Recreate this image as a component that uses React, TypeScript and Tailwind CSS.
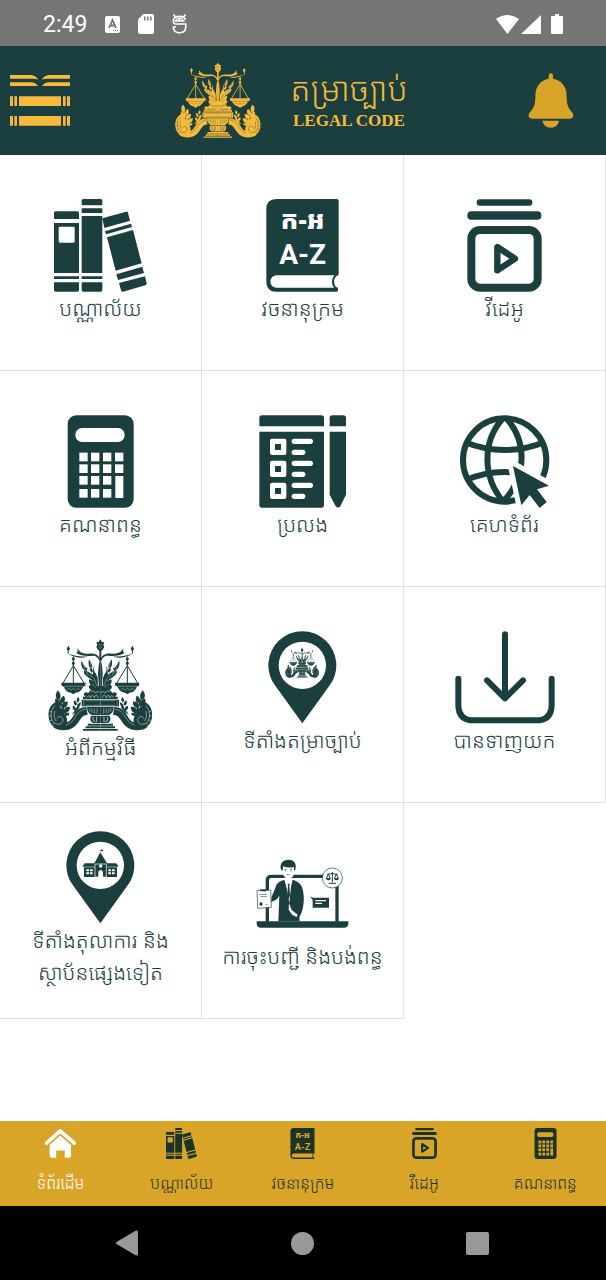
import React from 'react';

interface IconProps {
  className?: string;
  cut?: string;
}

interface MenuItem {
  label: string;
  icon: React.ReactNode;
}

// one half of the emblem, the other half is mirrored
const EmblemHalf = ({ cut }: { cut: string }) => (
  <g>
    {/* beam */}
    <path d="M302 118 C296 102 284 99 268 100 C254 101 246 99 239 92 L233 84 L234 95 L229 97 C240 106 262 108 278 106 C290 106 296 112 299 122Z" />
    <path d="M202 97 C216 106 240 109 264 108 L250 112 C232 112 212 107 202 97Z" />
    <path d="M206 76 L211 85 L207 92 L207 99 L204 99 L204 92 L201 85Z" />
    {/* hanging pan */}
    <path d="M221 108 l5 8 l-4 6 l4 7 l-5 9 l-5 -9 l4 -7 l-4 -6Z" />
    <path d="M221 136 L189 190 M221 136 L254 190 M221 136 V190" fill="none" stroke="currentColor" strokeWidth="3" />
    <path d="M185 187 H258 L257 196 L250 199 C246 211 236 216 228 217 L221 222 L214 217 C205 216 196 211 193 199 L186 196Z" />
    <path d="M193 198 H249 M201 208 l6 -4 l7 5 l7 -5 l7 5 l7 -5 l6 4" fill="none" stroke={cut} strokeWidth="1" />
    {/* flames */}
    <path d="M302 112 L297 136 L295 160 L298 206 H302Z" />
    <path d="M286 132 C281 146 283 153 288 159 L294 172 L295 206 L282 182 C270 176 265 166 264 152 C269 158 275 158 278 163 C282 158 279 150 281 143Z" />
    <path d="M268 117 C265 130 267 139 273 145 L269 147 L276 158 L280 153 L276 143 C281 138 275 128 268 117Z" />
    <path d="M245 121 C243 134 247 145 255 149 C251 153 252 160 258 165 L272 177 L266 160 L261 150 L264 144 C256 142 252 132 245 121Z" />
    <path d="M270 177 C266 182 268 189 273 193 L268 196 C266 203 271 208 276 208 H302 V198 L292 196 C287 186 280 180 270 177Z" />
    <path d="M250 130 L256 148 L266 166 M272 126 L275 144 M270 163 L284 176 L292 198 M277 190 L288 202" fill="none" stroke={cut} strokeWidth="1" />
    {/* lotus rim */}
    <path d="M302 206 H276 L266 218 C259 213 251 217 253 224 L258 229 H250 V236 H302Z" />
    <path d="M262 232 q6 -12 11 0 q5 -14 11 0 q6 -16 12 0 M274 214 q7 -6 13 3 q6 -7 13 0" fill="none" stroke={cut} strokeWidth="1.5" />
    {/* box and urn */}
    <path d="M246 238 H302 V258 H246Z" />
    <path d="M252 238 V257 M258 255 H302 M258 241 H302" fill="none" stroke={cut} strokeWidth="1" />
    <path d="M262 260 H302 V284 H277 C268 281 262 273 262 260Z" />
    <path d="M269 264 l3 10 M276 264 l2 14 M284 264 l1 16 M292 264 v17" fill="none" stroke={cut} strokeWidth="1.2" />
    <path d="M275 286 H302 V308 H283 C270 306 270 292 275 286Z" />
    <path d="M281 290 C278 296 280 303 287 304 M291 289 V305" fill="none" stroke={cut} strokeWidth="2" />
    <path d="M264 310 H302 V316 H264Z M258 318 H302 V324 H258Z M250 326 H302 V331 H250Z" />
    {/* arm */}
    <path d="M260 260 C240 261 230 270 221 286 C213 300 207 307 190 307 L160 320 C177 333 207 333 224 319 C241 305 242 284 264 283Z" />
    <path d="M258 267 C242 268 233 279 226 292 C217 306 207 315 186 315" fill="none" stroke={cut} strokeWidth="1.2" />
    {/* scroll */}
    <path d="M170 244 C150 252 145 273 147 291 C149 312 166 328 185 325 C201 320 206 301 200 290 C194 276 180 265 170 244Z" />
    <path d="M166 256 C153 268 152 289 158 301 C166 316 188 315 190 300 C191 288 174 285 172 295 M166 272 C161 285 165 297 170 302 M150 272 l6 3 M148 286 l7 1 M151 302 l6 -3 M160 314 l4 -5" fill="none" stroke={cut} strokeWidth="1.4" />
    {/* leaf column */}
    <path d="M175 210 C167 219 166 229 172 236 L179 238 C186 229 182 219 175 210Z" />
    <path d="M169 234 C164 240 166 250 174 255 L183 262 L184 250 C181 241 176 237 169 234Z" />
    <path d="M193 226 C184 229 181 236 184 245 L189 249 C197 243 198 235 193 226Z" />
    <path d="M204 244 C193 243 187 248 187 256 L191 263 C200 262 205 254 204 244Z" />
    <path d="M211 260 C201 258 194 263 192 271 L197 278 C206 277 211 270 211 260Z" />
    <path d="M178 236 L186 262 L198 288 L208 284 L209 277 L200 279 L190 258 L182 236Z M172 256 L180 272 L194 286 L192 272 L184 262Z" />
    {/* small leaf by the arm */}
    <path d="M236 230 C229 236 230 242 234 247 C240 242 241 236 236 230Z M225 240 C220 246 222 252 228 256 L232 252 C231 246 229 243 225 240Z M243 246 C235 248 232 254 234 261 C241 259 244 253 243 246Z M220 256 C217 263 220 268 226 270 L229 265 C228 260 225 257 220 256Z M234 250 L231 262 L216 283 L228 276 L240 262Z" />
  </g>
);

const EmblemShape = ({ cut = '#ffffff' }: { cut?: string }) => (
  <g fill="currentColor">
    <EmblemHalf cut={cut} />
    <g transform="translate(604 0) scale(-1 1)">
      <EmblemHalf cut={cut} />
    </g>
    <path d="M302 57 L307 65 L314 66 L311 74 L314 80 L309 88 L305 92 V120 H299 V92 L295 88 L290 80 L293 74 L290 66 L297 65Z" />
    <path d="M297 71 l5 4 l5 -4 M297 80 l5 4 l5 -4" fill="none" stroke={cut} strokeWidth="1.2" />
  </g>
);

const EmblemIcon = ({ className }: IconProps) => (
  <svg viewBox="142 11 321 321" className={className} aria-hidden="true">
    <EmblemShape />
  </svg>
);

const LibraryIcon = ({ className, cut = '#ffffff' }: IconProps) => (
  <svg viewBox="163 57 279 279" className={className} fill="currentColor" aria-hidden="true">
    <path d="M168 94 H233 Q238 94 238 99 V117 H163 V99 Q163 94 168 94Z M163 129 H238 V279 H163Z M163 289 H238 V297 H163Z M163 307 H238 V330 Q238 335 233 335 H168 Q163 335 163 330Z" />
    <rect x="177" y="140" width="48" height="48" rx="4" fill={cut} />
    <path d="M251 57 H303 Q308 57 308 62 V76 H246 V62 Q246 57 251 57Z M246 85 H308 V99 H246Z M246 108 H308 V279 H246Z M246 289 H308 V297 H246Z M246 307 H308 V330 Q308 335 303 335 H251 Q246 335 246 330Z" />
    <path d="M308 115 L379 95 Q384 93 385 98 L391 122 L314 144Z M316 154 L394 131 L397 141 L319 163Z M322 172 L400 150 L426 250 L348 272Z M350 283 L428 260 L433 279 L355 300Z M358 309 L436 289 L441 309 Q442 314 437 316 L370 335 Q365 336 364 331Z" />
  </svg>
);

const DictionaryIcon = ({ className, cut = '#ffffff' }: IconProps) => (
  <svg viewBox="770 57 279 279" className={className} fill="currentColor" aria-hidden="true">
    <path d="M831 57 H1012 Q1018 57 1018 63 V282 Q1018 286 1012 288 C1002 296 1002 312 1010 321 Q1016 322 1016 326 V331 Q1016 335 1011 335 H831 Q801 335 801 305 V87 Q801 57 831 57Z" />
    <path d="M832 286 H1006 C996 296 996 313 1004 323 H832 C807 322 807 288 832 286Z" fill={cut} />
    <text x="910" y="146" textAnchor="middle" fontSize="76" fontWeight="900" fill={cut} className="font-['Noto_Sans_Khmer','Noto_Sans',sans-serif]">ក-អ</text>
    <text x="910" y="252" textAnchor="middle" fontSize="84" fontWeight="700" fill={cut} className="font-[Roboto,sans-serif]">A-Z</text>
  </svg>
);

const VideoIcon = ({ className }: IconProps) => (
  <svg viewBox="467 57 279 279" className={className} fill="currentColor" aria-hidden="true">
    <rect x="523" y="58" width="167" height="19" rx="9" />
    <rect x="495" y="94" width="222" height="25" rx="12" />
    <rect x="507" y="150" width="199" height="173" rx="26" fill="none" stroke="currentColor" strokeWidth="24" />
    <path d="M585 201 V271 L638 236Z" fill="none" stroke="currentColor" strokeWidth="19" strokeLinejoin="round" />
  </svg>
);

const keyRows = [158, 193, 228, 267];
const keyCols = [240, 275, 311, 347];

const CalculatorIcon = ({ className, cut = '#ffffff' }: IconProps) => (
  <svg viewBox="164 45 279 279" className={className} fill="currentColor" aria-hidden="true">
    <rect x="205" y="46" width="198" height="277" rx="26" />
    <g fill={cut}>
      <rect x="228" y="84" width="148" height="42" rx="20" />
      {keyRows.map((y, row) =>
        keyCols.map((x, col) =>
          row > 1 && col === 3 ? null : <rect key={`${x}-${y}`} x={x} y={y} width="25" height="26" />
        )
      )}
      <rect x="348" y="228" width="24" height="66" />
    </g>
  </svg>
);

const ExamIcon = ({ className }: IconProps) => (
  <svg viewBox="769 46 279 279" className={className} fill="currentColor" aria-hidden="true">
    <path d="M787 47 H965 Q973 47 973 55 V80 H779 V55 Q779 47 787 47Z M779 96 H973 V316 Q973 324 965 324 H787 Q779 324 779 316Z" />
    <path d="M998 47 H1031 Q1039 47 1039 55 V80 H990 V55 Q990 47 998 47Z M990 96 H1039 V285 L1022 320 Q1015 327 1008 320 L990 285Z" />
    {[117, 183, 249].map((y) => (
      <g key={y}>
        <rect x="811" y={y} width="49" height="49" rx="6" fill="#ffffff" />
        <rect x="826" y={y + 16} width="18" height="18" />
        <rect x="876" y={y} width="64" height="16" rx="8" fill="#ffffff" />
        <rect x="876" y={y + 33} width="41" height="16" rx="8" fill="#ffffff" />
      </g>
    ))}
  </svg>
);

const WebsiteIcon = ({ className }: IconProps) => (
  <svg viewBox="467 45 279 279" className={className} aria-hidden="true">
    <g fill="none" stroke="currentColor" strokeWidth="18">
      <circle cx="607" cy="180" r="125" />
      <path d="M600 57 C540 125 540 230 602 304" />
      <path d="M614 57 C674 125 674 230 603 304" />
      <path d="M486 126 Q607 174 728 126" />
      <path d="M490 241 Q545 216 607 216 Q670 216 724 241" />
    </g>
    <path d="M632 198 L740 257 L704 268 L733 306 L712 324 L682 285 L657 316Z" fill="#ffffff" stroke="#ffffff" strokeWidth="30" />
    <path d="M632 198 L740 257 L704 268 L733 306 L712 324 L682 285 L657 316Z" fill="currentColor" />
  </svg>
);

const DownloadIcon = ({ className }: IconProps) => (
  <svg viewBox="758 35 300 279" className={className} fill="none" stroke="currentColor" strokeWidth="18" strokeLinecap="round" strokeLinejoin="round" aria-hidden="true">
    <path d="M908 45 V235 M854 183 L908 237 L962 183" />
    <path d="M768 178 V256 Q768 303 815 303 H1001 Q1048 303 1048 256 V178" />
  </svg>
);

const PinShape = () => (
  <>
    <path d="M302 311 L222 200 A102 102 0 1 1 382 200Z" fill="currentColor" />
    <circle cx="302" cy="137" r="71" fill="#ffffff" />
  </>
);

const BookPinIcon = ({ className }: IconProps) => (
  <svg viewBox="163 34 279 279" className={className} aria-hidden="true">
    <PinShape />
    <svg x="249" y="84" width="105" height="92" viewBox="142 55 321 280">
      <EmblemShape />
    </svg>
  </svg>
);

const CourtPinIcon = ({ className }: IconProps) => (
  <svg viewBox="163 34 279 279" className={className} fill="currentColor" aria-hidden="true">
    <PinShape />
    <path d="M302 90 H310 V95 H302Z M302 98 L322 131 H350 L357 141 H248 L255 131 H284Z" />
    <path d="M253 143 H352 V172 H253Z" />
    <path d="M286 133 H320 V172 H286Z" stroke="#ffffff" strokeWidth="2" />
    <g fill="#ffffff">
      <circle cx="303" cy="139" r="5" />
      <path d="M296 172 V156 Q303 146 310 156 V172Z" />
      <path d="M260 149 h8 v6 h-8z M271 149 h8 v6 h-8z M260 158 h8 v6 h-8z M271 158 h8 v6 h-8z M326 149 h8 v6 h-8z M337 149 h8 v6 h-8z M326 158 h8 v6 h-8z M337 158 h8 v6 h-8z" />
    </g>
  </svg>
);

const RegistrationIcon = ({ className }: IconProps) => (
  <svg viewBox="163 22 279 279" className={className} fill="currentColor" aria-hidden="true">
    {/* laptop */}
    <path d="M197 246 V122 Q197 110 209 110 H396 Q406 110 406 120 V246" fill="none" stroke="currentColor" strokeWidth="10" />
    <path d="M165 245 H440 V252 Q439 264 427 264 H178 Q166 264 165 252Z" />
    {/* lawyer */}
    <path d="M243 74 H278 V96 Q276 112 268 114 V124 L261 134 L252 124 V114 Q243 108 243 96Z" fill="#ffffff" />
    <path d="M238 90 C233 71 244 60 260 60 C277 59 286 72 281 90 L277 94 V82 C267 85 252 84 245 79 L242 94Z" />
    <path d="M248 89 h7 M264 89 h7 M250 94 h4 M265 94 h4 M256 104 q4 3 8 0" fill="none" stroke="currentColor" strokeWidth="2" />
    <path d="M248 120 C230 126 224 131 221 145 L210 171 L208 186 C220 184 228 178 233 168 L230 245 H294 L293 232 C303 218 308 188 306 168 C304 138 296 128 273 120 L261 165Z" />
    <path d="M251 121 L261 129 L270 121 L263 190Z" fill="#ffffff" />
    <path d="M258 132 h6 l-1 7 l2 28 l-4 12 l-4 -12 l2 -28Z" />
    <path d="M262 190 L270 211 L288 225 L285 232 L272 226 L261 210Z" fill="#ffffff" />
    {/* document */}
    <path d="M166 153 L207 151 L209 203 L168 206Z" fill="#ffffff" stroke="currentColor" strokeWidth="2" />
    <path d="M176 149 h18 v6 h-18z M172 164 h24 v1 h-24z M176 170 h20 v1 h-20z" />
    <circle cx="178" cy="193" r="5" />
    <path d="M190 195 h11" stroke="currentColor" />
    {/* chat */}
    <path d="M325 170 L334 174 H382 V204 H333 V181Z" />
    <path d="M341 183 H373 M341 191 H361" stroke="#ffffff" strokeWidth="4" />
    {/* scales badge */}
    <circle cx="392" cy="115" r="30" fill="#ffffff" stroke="currentColor" strokeWidth="2" />
    <path d="M392 97 V128 M377 103 Q385 105 392 101 Q399 105 408 103 M381 131 H403 M380 103 L374 117 H386 L380 103 M404 103 L398 117 H410 L404 103" fill="none" stroke="currentColor" strokeWidth="3" />
    <path d="M373 117 H388 Q380 127 373 117Z M397 117 H412 Q404 127 397 117Z" />
  </svg>
);

const HomeIcon = ({ className }: IconProps) => (
  <svg viewBox="135 54 94 93" className={className} fill="currentColor" aria-hidden="true">
    <path d="M140 99 L181 62 L224 99" fill="none" stroke="currentColor" strokeWidth="11" strokeLinecap="round" strokeLinejoin="round" />
    <path d="M181 76 L214 105 V137 Q214 144 207 144 H195 V122 H169 V144 H156 Q149 144 149 137 V105Z" />
  </svg>
);

const menuItems: MenuItem[] = [
  { label: 'បណ្ណាល័យ', icon: <LibraryIcon className="size-[93px]" /> },
  { label: 'វចនានុក្រម', icon: <DictionaryIcon className="size-[93px]" /> },
  { label: 'វីដេអូ', icon: <VideoIcon className="size-[93px]" /> },
  { label: 'គណនាពន្ធ', icon: <CalculatorIcon className="size-[93px]" /> },
  { label: 'ប្រលង', icon: <ExamIcon className="size-[93px]" /> },
  { label: 'គេហទំព័រ', icon: <WebsiteIcon className="size-[93px]" /> },
  { label: 'អំពីកម្មវិធី', icon: <EmblemIcon className="size-[107px]" /> },
  { label: 'ទីតាំងតម្រាច្បាប់', icon: <BookPinIcon className="size-[93px]" /> },
  { label: 'បានទាញយក', icon: <DownloadIcon className="h-[93px] w-[100px]" /> },
  { label: 'ទីតាំងតុលាការ និងស្ថាប័នផ្សេងទៀត', icon: <CourtPinIcon className="size-[93px]" /> },
  { label: 'ការចុះបញ្ជី និងបង់ពន្ធ', icon: <RegistrationIcon className="size-[93px]" /> }
];

const tabs: MenuItem[] = [
  { label: 'ទំព័រដើម', icon: <HomeIcon className="size-[31px]" /> },
  { label: 'បណ្ណាល័យ', icon: <LibraryIcon className="size-[31px]" cut="#d9a528" /> },
  { label: 'វចនានុក្រម', icon: <DictionaryIcon className="size-[31px]" cut="#d9a528" /> },
  { label: 'វីដេអូ', icon: <VideoIcon className="size-[31px]" /> },
  { label: 'គណនាពន្ធ', icon: <CalculatorIcon className="size-[31px]" cut="#d9a528" /> }
];

const StatusBar = () => (
  <div className="flex h-[46px] items-center justify-between bg-[#757575] px-[43px] pt-0.5 text-white">
    <div className="flex items-center gap-[18px]">
      <span className="font-[Roboto,sans-serif] text-[23px] leading-none">2:49</span>
      <svg viewBox="0 0 15 17" className="h-[17px] w-[15px]" aria-hidden="true">
        <rect width="15" height="17" rx="2" fill="currentColor" />
        <path d="M4 12 L7.500 4 L11 12 M5.500 9.500 H9.500" fill="none" stroke="#757575" strokeWidth="1.800" />
        <path d="M8 14 h1 v1 h-1z M10 14 h1 v1 h-1z M12 14 h1 v1 h-1z" fill="#757575" />
      </svg>
      <svg viewBox="0 0 16 20" className="h-5 w-4" aria-hidden="true">
        <path d="M5.500 0 H14 Q16 0 16 2 V18 Q16 20 14 20 H2 Q0 20 0 18 V5.500Z" fill="currentColor" />
        <path d="M6 2.500 h1.500 v4 h-1.500z M9 2.500 h1.500 v4 h-1.500z M12 2.500 h1.500 v4 h-1.500z" fill="#757575" />
      </svg>
      <svg viewBox="0 0 15 20" className="h-5 w-[15px]" fill="none" stroke="currentColor" strokeWidth="1.600" aria-hidden="true">
        <path d="M1.500 0.500 L3.500 3 M13.500 0.500 L11.500 3" />
        <path d="M13.500 6 C12.500 1.200 2.500 1.200 1.500 6 C1 9 2 10 4 10 H13.800 V13 C13.500 20.500 2.500 20.500 1.500 14.500 V13 H4" />
        <path d="M3.500 7 Q7.500 1 11.500 7Z" fill="currentColor" />
        <path d="M5.500 5.500 h1 M8.500 5.500 h1" stroke="#757575" />
      </svg>
    </div>
    <div className="flex items-center">
      <svg viewBox="0 0 23 19" className="h-[19px] w-[23px]" fill="currentColor" aria-hidden="true">
        <path d="M0 4 Q11.500 -4 23 4 L11.500 19Z" />
      </svg>
      <svg viewBox="0 0 20 19" className="ml-0.5 h-[19px] w-5" fill="currentColor" aria-hidden="true">
        <path d="M20 0 V19 H0Z" />
      </svg>
      <svg viewBox="0 0 12 20" className="ml-2.5 h-5 w-3" fill="currentColor" aria-hidden="true">
        <path d="M4 0 H8 V2 H11 Q12 2 12 3 V19 Q12 20 11 20 H1 Q0 20 0 19 V3 Q0 2 1 2 H4Z" />
      </svg>
    </div>
  </div>
);

const Header = () => (
  <header className="flex h-[109px] items-center justify-between bg-[#1b3f3f] pr-8 pl-[10px] text-[#f6bb3b]">
    <button type="button" aria-label="Menu">
      <svg viewBox="0 0 180 153" className="h-[51px] w-[60px]" fill="currentColor" aria-hidden="true">
        <path d="M0 0 H62 Q78 1 84 14 Q78 11 68 11 H0Z M180 0 H118 Q102 1 96 14 Q102 11 112 11 H180Z" />
        <path d="M0 22 H62 Q78 23 84 33 H0Z M180 22 H118 Q102 23 96 33 H180Z" />
        <path d="M0 64 h9 v29 h-9z M13 64 h8 v29 h-8z M27 64 h126 v29 h-126z M159 64 h8 v29 h-8z M171 64 h9 v29 h-9z" />
        <path d="M0 123 h9 v29 h-9z M13 123 h8 v29 h-8z M27 123 h126 v29 h-126z M159 123 h8 v29 h-8z M171 123 h9 v29 h-9z" />
      </svg>
    </button>
    <div className="flex items-center gap-7 pr-4">
      <svg viewBox="142 55 321 280" className="h-[77px] w-[88px]" aria-hidden="true">
        <EmblemShape cut="#1b3f3f" />
      </svg>
      <h1 className="flex flex-col items-center">
        <span className="font-['Noto_Sans_Khmer','Noto_Sans',sans-serif] text-[33px] leading-10 font-light">តម្រាច្បាប់</span>
        <span className="font-['Liberation_Serif',serif] text-[17px] leading-6 font-bold">LEGAL CODE</span>
      </h1>
    </div>
    <button type="button" aria-label="Notifications" className="text-[#d9a528]">
      <svg viewBox="676 218 138 166" className="h-[55px] w-[46px]" fill="currentColor" aria-hidden="true">
        <path d="M745 219 Q751 219 751 226 V235 C777 239 792 260 792 284 C792 312 796 324 809 337 C816 345 812 356 800 356 H690 C677 356 674 345 681 337 C694 324 698 312 698 284 C698 260 713 239 738 235 V226 Q738 219 745 219Z" />
        <path d="M719 362 H769 C766 376 757 383 744 383 C731 383 722 376 719 362Z" />
      </svg>
    </button>
  </header>
);

export default function App() {
  return (
    <div className="flex min-h-screen flex-col bg-white font-['Noto_Sans_Khmer','Noto_Sans',sans-serif]">
      <StatusBar />
      <Header />
      <main className="flex-1">
        <div className="grid grid-cols-3 text-[#1b3f3f]">
          {menuItems.map((item) => (
            <button
              key={item.label}
              type="button"
              className="flex h-[216px] flex-col items-center justify-center border-r border-b border-[#e2e2e2] px-4 pb-[3px]"
            >
              {item.icon}
              <span className="text-[21px] leading-8 font-light">{item.label}</span>
            </button>
          ))}
        </div>
      </main>
      <nav className="grid h-[85px] grid-cols-5 bg-[#d9a528]">
        {tabs.map((tab, index) => (
          <a
            key={tab.label}
            href="#"
            className={`flex flex-col items-center gap-3 pt-[7px] ${index === 0 ? 'text-white' : 'text-[#1b3428]'}`}
          >
            {tab.icon}
            <span className="text-[16px] leading-6 font-light">{tab.label}</span>
          </a>
        ))}
      </nav>
      <div className="flex h-[74px] items-center justify-between bg-black pr-[117px] pl-[115px] text-[#999999]">
        <button type="button" aria-label="Back">
          <svg viewBox="0 0 24 26" className="h-[26px] w-6" fill="currentColor" aria-hidden="true">
            <path d="M21 0.500 Q23 0 23 2 V24 Q23 26 21 25.500 L1.500 14 Q0 13 1.500 12Z" />
          </svg>
        </button>
        <button type="button" aria-label="Home" className="size-[23px] rounded-full bg-[#999999]" />
        <button type="button" aria-label="Recent apps" className="size-[23px] rounded-xs bg-[#999999]" />
      </div>
    </div>
  );
}
